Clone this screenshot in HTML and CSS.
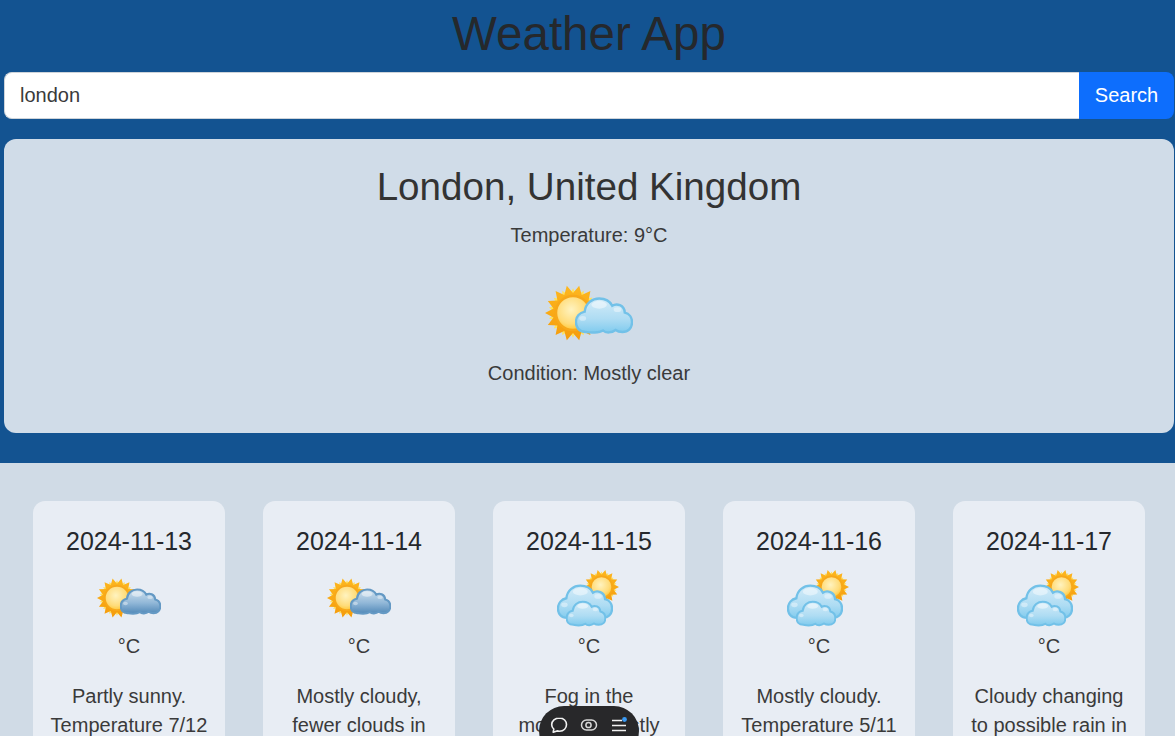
FILE: index.html
```html
<!DOCTYPE html>
<html>
  <head>
    <title>Weather App</title>
    <link rel="stylesheet" href="styles.css">
  </head>
  <body>
    <svg class="defs" width="0" height="0">
      <defs>
        <radialGradient id="sunFill" cx="45%" cy="40%" r="60%">
          <stop offset="0" stop-color="#fff3c0"/>
          <stop offset="0.7" stop-color="#ffdc7a"/>
          <stop offset="1" stop-color="#ffc93a"/>
        </radialGradient>
        <linearGradient id="rayFill" x1="0" y1="0" x2="0" y2="1">
          <stop offset="0" stop-color="#fdb71f"/>
          <stop offset="1" stop-color="#f59c0c"/>
        </linearGradient>
        <linearGradient id="cloudLight" x1="0" y1="0" x2="0" y2="1">
          <stop offset="0" stop-color="#d4ecf8"/>
          <stop offset="0.6" stop-color="#aedcf3"/>
          <stop offset="1" stop-color="#80cbee"/>
        </linearGradient>
        <linearGradient id="cloudDark" x1="0" y1="0" x2="0" y2="1">
          <stop offset="0" stop-color="#d0e1ee"/>
          <stop offset="0.55" stop-color="#92b8d8"/>
          <stop offset="1" stop-color="#5289b8"/>
        </linearGradient>
        <symbol id="sun" viewBox="-30 -30 60 60">
          <polygon fill="#ffe25c" transform="rotate(12.857) scale(.88)" points="28,0 19.5,4.45 25.2,12.1 15.6,12.5 17.4,21.9 8.7,18 6.2,27.3 0,20 -6.2,27.3 -8.7,18 -17.4,21.9 -15.6,12.5 -25.2,12.1 -19.5,4.45 -28,0 -19.5,-4.45 -25.2,-12.1 -15.6,-12.5 -17.4,-21.9 -8.7,-18 -6.2,-27.3 0,-20 6.2,-27.3 8.7,-18 17.4,-21.9 15.6,-12.5 25.2,-12.1 19.5,-4.45"/>
          <polygon fill="url(#rayFill)" points="28,0 19.5,4.45 25.2,12.1 15.6,12.5 17.4,21.9 8.7,18 6.2,27.3 0,20 -6.2,27.3 -8.7,18 -17.4,21.9 -15.6,12.5 -25.2,12.1 -19.5,4.45 -28,0 -19.5,-4.45 -25.2,-12.1 -15.6,-12.5 -17.4,-21.9 -8.7,-18 -6.2,-27.3 0,-20 6.2,-27.3 8.7,-18 17.4,-21.9 15.6,-12.5 25.2,-12.1 19.5,-4.45"/>
          <circle r="17" fill="url(#sunFill)" stroke="#f7a81a" stroke-width="2.500"/>
        </symbol>
        <symbol id="cloud" viewBox="0 0 60 38">
          <path d="M11 36C4 36 1 31 1 26C1 20 5 16 10 15C11 6 18 1.500 25 1.500C32 1.500 36 4 38.500 9C43 6 51 8 51.500 16C56 17 59 21 59 26C59 32 55 36 49 36C46 36 44 35.500 42 34C38 37 32 37.500 29 34.500C25 37 16 37 11 36Z"/>
          <ellipse cx="25" cy="8" rx="8" ry="4" fill="#ffffff" fill-opacity=".45" stroke="none"/>
          <ellipse cx="44" cy="13" rx="4" ry="2.500" fill="#ffffff" fill-opacity=".4" stroke="none"/>
          <ellipse cx="8" cy="22" rx="3.500" ry="2.500" fill="#ffffff" fill-opacity=".4" stroke="none"/>
        </symbol>
      </defs>
    </svg>

    <div class="page">
      <header class="top">
        <h1 class="title">Weather App</h1>
        <form class="search">
          <input class="search-input" type="text" value="london">
          <button class="search-btn" type="button">Search</button>
        </form>
        <section class="current">
          <h2 class="city">London, United Kingdom</h2>
          <p class="current-line">Temperature: 9°C</p>
          <svg class="icon-big" viewBox="0 0 88 58" aria-hidden="true">
            <use href="#sun" x="-2" y="-1" width="60" height="60"/>
            <use href="#cloud" x="30" y="13" width="58" height="37" fill="url(#cloudLight)" stroke="#72c1e8" stroke-width="2.500"/>
          </svg>
          <p class="current-line">Condition: Mostly clear</p>
        </section>
      </header>

      <main class="forecast">
        <div class="day">
          <h3 class="date">2024-11-13</h3>
          <svg class="icon-small" viewBox="0 0 64 64" aria-hidden="true">
            <use href="#sun" x="-1.500" y="8.500" width="43" height="43"/>
            <use href="#cloud" x="23" y="20" width="41" height="27" fill="url(#cloudDark)" stroke="#6499c4" stroke-width="3"/>
          </svg>
          <p class="temp">°C</p>
          <p class="desc">Partly sunny. Temperature 7/12 degrees.</p>
        </div>
        <div class="day">
          <h3 class="date">2024-11-14</h3>
          <svg class="icon-small" viewBox="0 0 64 64" aria-hidden="true">
            <use href="#sun" x="-1.500" y="8.500" width="43" height="43"/>
            <use href="#cloud" x="23" y="20" width="41" height="27" fill="url(#cloudDark)" stroke="#6499c4" stroke-width="3"/>
          </svg>
          <p class="temp">°C</p>
          <p class="desc">Mostly cloudy, fewer clouds in the afternoon.</p>
        </div>
        <div class="day">
          <h3 class="date">2024-11-15</h3>
          <svg class="icon-small" viewBox="0 0 64 64" aria-hidden="true">
            <use href="#sun" x="25.750" y="0.250" width="37.500" height="37.500"/>
            <use href="#cloud" x="0" y="16" width="56" height="36" fill="url(#cloudLight)" stroke="#72c1e8" stroke-width="2.500"/>
            <use href="#cloud" x="9" y="32" width="40" height="27" fill="url(#cloudLight)" stroke="#72c1e8" stroke-width="3"/>
          </svg>
          <p class="temp">°C</p>
          <p class="desc">Fog in the morning, mostly cloudy later.</p>
        </div>
        <div class="day">
          <h3 class="date">2024-11-16</h3>
          <svg class="icon-small" viewBox="0 0 64 64" aria-hidden="true">
            <use href="#sun" x="25.750" y="0.250" width="37.500" height="37.500"/>
            <use href="#cloud" x="0" y="16" width="56" height="36" fill="url(#cloudLight)" stroke="#72c1e8" stroke-width="2.500"/>
            <use href="#cloud" x="9" y="32" width="40" height="27" fill="url(#cloudLight)" stroke="#72c1e8" stroke-width="3"/>
          </svg>
          <p class="temp">°C</p>
          <p class="desc">Mostly cloudy. Temperature 5/11 degrees.</p>
        </div>
        <div class="day">
          <h3 class="date">2024-11-17</h3>
          <svg class="icon-small" viewBox="0 0 64 64" aria-hidden="true">
            <use href="#sun" x="25.750" y="0.250" width="37.500" height="37.500"/>
            <use href="#cloud" x="0" y="16" width="56" height="36" fill="url(#cloudLight)" stroke="#72c1e8" stroke-width="2.500"/>
            <use href="#cloud" x="9" y="32" width="40" height="27" fill="url(#cloudLight)" stroke="#72c1e8" stroke-width="3"/>
          </svg>
          <p class="temp">°C</p>
          <p class="desc">Cloudy changing to possible rain in the evening.</p>
        </div>
      </main>
    </div>

    <div class="toolbar">
      <svg class="tool" viewBox="0 0 20 20" aria-hidden="true">
        <path d="M10.500 3C6 3 2.700 6 2.700 9.700C2.700 11.500 3.500 13 4.800 14.100L4.200 17.200L8 15.900C8.800 16.100 9.600 16.200 10.500 16.200C14.800 16.200 17.500 13.200 17.500 9.600C17.500 6 14.800 3 10.500 3Z" fill="none" stroke="#f2f2f2" stroke-width="1.600" stroke-linejoin="round"/>
      </svg>
      <svg class="tool" viewBox="0 0 20 20" aria-hidden="true">
        <rect x="2.500" y="5" width="15" height="10" rx="5" fill="none" stroke="#d8d8d8" stroke-width="1.500"/>
        <circle cx="9.500" cy="10" r="2.600" fill="none" stroke="#d8d8d8" stroke-width="1.500"/>
      </svg>
      <svg class="tool" viewBox="0 0 20 20" aria-hidden="true">
        <path d="M3 5.500H13M3 10.500H17M3 15.500H17" fill="none" stroke="#f2f2f2" stroke-width="1.700"/>
        <circle cx="15.500" cy="4.500" r="2.400" fill="#3b9bf5"/>
      </svg>
    </div>
  </body>
</html>
```

FILE: styles.css
```css
/* page */
html,
body {
  margin: 0;
  height: 100%;
  overflow: hidden;
}

body {
  font-family: "Liberation Sans", Arial, sans-serif;
  background-color: #d0dbe6;
  color: #3a3a3a;
}

.defs {
  display: block;
}

.page {
  height: 736px;
  overflow: hidden;
}

/* top blue part */
.top {
  background-color: #135391;
  padding: 5px 1px 30px 4px;
}

.title {
  margin: 0 0 9px 0;
  text-align: center;
  font-size: 47.500px;
  font-weight: 400;
  line-height: 58px;
  color: #25282c;
}

.search {
  display: flex;
  height: 47px;
  margin: 0 0 20px 0;
}

.search-input {
  flex: 1;
  min-width: 0;
  padding: 0 15px;
  border: 1px solid #ced4da;
  border-right: none;
  border-radius: 8px 0 0 8px;
  background-color: #ffffff;
  color: #3a3a3a;
  font-family: inherit;
  font-size: 20px;
}

.search-btn {
  width: 95px;
  padding: 0;
  border: none;
  border-radius: 0 8px 8px 0;
  background-color: #0d6efd;
  color: #ffffff;
  font-family: inherit;
  font-size: 20px;
}

.current {
  display: flex;
  flex-direction: column;
  align-items: center;
  height: 294px;
  box-sizing: border-box;
  padding-top: 25px;
  border-radius: 12px;
  background-color: #d0dce8;
}

.city {
  margin: 0 0 10px 0;
  font-size: 38.600px;
  font-weight: 400;
  line-height: 46px;
  color: #333333;
}

.current-line {
  margin: 0;
  font-size: 20px;
  line-height: 30px;
}

.icon-big {
  width: 88px;
  height: 58px;
  margin: 34px 0 16px 0;
}

/* forecast cards */
.forecast {
  display: flex;
  gap: 38px;
  padding: 38px 0 0 33px;
}

.day {
  flex: 0 0 192px;
  height: 300px;
  box-sizing: border-box;
  padding: 26px 16px 0 16px;
  border-radius: 12px;
  background-color: #e8edf4;
  text-align: center;
}

.date {
  margin: 0;
  font-size: 25px;
  font-weight: 400;
  line-height: 29px;
  color: #25282c;
}

.icon-small {
  display: block;
  width: 64px;
  height: 64px;
  margin: 12px auto 0 auto;
}

.temp {
  margin: 0 0 22px 0;
  font-size: 20px;
  line-height: 28px;
}

.desc {
  margin: 0;
  font-size: 20px;
  line-height: 29px;
}

/* floating toolbar */
.toolbar {
  position: fixed;
  left: 539px;
  top: 706px;
  display: flex;
  justify-content: center;
  align-items: flex-start;
  gap: 10px;
  box-sizing: border-box;
  width: 100px;
  height: 50px;
  padding-top: 9px;
  border-radius: 25px;
  background-color: #28282a;
}

.tool {
  width: 20px;
  height: 20px;
}
```
